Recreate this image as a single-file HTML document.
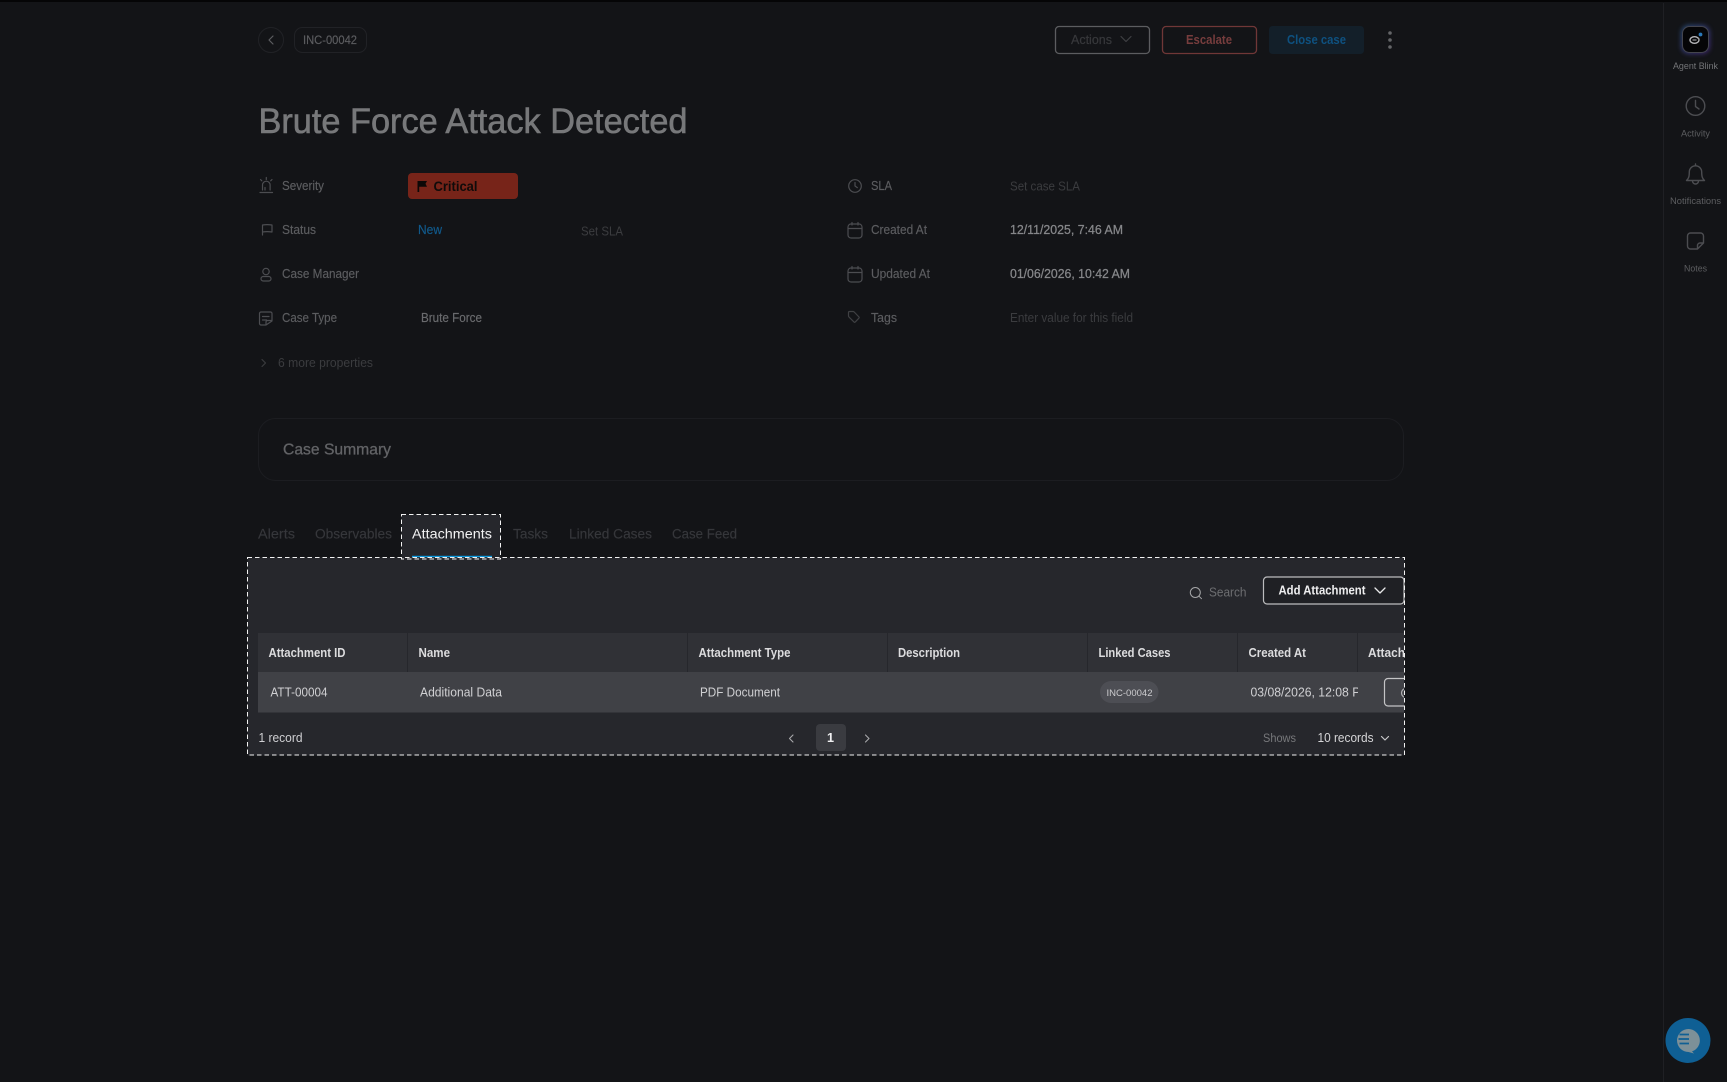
<!DOCTYPE html>
<html lang="en">
<head>
<meta charset="utf-8">
<title>Brute Force Attack Detected</title>
<style>
html,body{margin:0;padding:0;background:#131417;width:1727px;height:1082px;overflow:hidden}
svg{display:block;position:absolute;left:0;top:0}
text{font-family:"Liberation Sans",sans-serif}
.lbl{font-size:12.5px;fill:#5c5d60;stroke:#5c5d60;stroke-width:.15}
.dim{font-size:12.5px;fill:#3b3c3f}
.val{font-size:12.5px;fill:#86878a;stroke:#86878a;stroke-width:.25}
.tab{font-size:14px;fill:#36373b;stroke:#36373b;stroke-width:.15}
.th{font-size:12.5px;fill:#dcdcde;font-weight:bold}
.td{font-size:12.5px;fill:#d0d0d3}
.side{font-size:9.5px;fill:#5d5e61;text-anchor:start}
.ic{fill:none;stroke:#4c4d51;stroke-width:1.2;stroke-linecap:round;stroke-linejoin:round}
</style>
</head>
<body>
<svg width="1727" height="1082" viewBox="0 0 1727 1082" xmlns="http://www.w3.org/2000/svg">
<defs>
<clipPath id="tbl"><rect x="258" y="630" width="1146" height="90"/></clipPath>
<clipPath id="cell"><rect x="1240" y="672" width="118" height="40"/></clipPath>
<filter id="glow" x="-50%" y="-50%" width="200%" height="200%"><feGaussianBlur stdDeviation="2.5"/></filter>
<linearGradient id="gl" x1="0" y1="0" x2="1" y2="1"><stop offset="0" stop-color="#2f6fb0"/><stop offset="1" stop-color="#5b2ea0"/></linearGradient>
</defs>
<rect width="1727" height="1082" fill="#131417"/>
<rect width="1727" height="2" fill="#050506"/>

<!-- right rail -->
<line x1="1663.5" y1="3" x2="1663.5" y2="1082" stroke="#1f2024" stroke-width="1"/>
<rect x="1681" y="25" width="29" height="29" rx="8" fill="url(#gl)" opacity=".6" filter="url(#glow)"/>
<rect x="1682.5" y="26.5" width="26" height="26" rx="7" fill="#050507" stroke="#44454e"/>
<ellipse cx="1694.5" cy="40" rx="4.5" ry="3.3" fill="none" stroke="#b5b5b8" stroke-width="1.4"/>
<line x1="1692.5" y1="40" x2="1696.5" y2="40" stroke="#b5b5b8"/>
<circle cx="1700.5" cy="34.5" r="1.9" fill="#2a78b8"/>
<circle cx="1699" cy="39" r=".8" fill="#888"/>
<text class="side" x="1673" y="69" textLength="45" lengthAdjust="spacingAndGlyphs" style="fill:#737477">Agent Blink</text>
<circle cx="1695.5" cy="106" r="9.3" class="ic" style="stroke-width:1.4"/>
<path d="M1695.5 100.5v6l3.500 2.500" class="ic" style="stroke-width:1.4"/>
<text class="side" x="1681" y="136.500" textLength="29" lengthAdjust="spacingAndGlyphs">Activity</text>
<path d="M1686.500 180.500c2.200-2 2.800-4 2.800-8.500a6.200 6.200 0 0 1 12.400 0c0 4.500 .6 6.500 2.800 8.500zM1692.500 181a3 3 0 0 0 6 0" class="ic" style="stroke-width:1.400"/>
<path d="M1695.500 164v1.800" class="ic" style="stroke-width:1.400"/>
<text class="side" x="1670" y="204" textLength="51" lengthAdjust="spacingAndGlyphs">Notifications</text>
<path d="M1697.500 249h-7a3 3 0 0 1-3-3v-10a3 3 0 0 1 3-3h10a3 3 0 0 1 3 3v7zM1697.500 249v-3.500a2.500 2.500 0 0 1 2.500-2.500h3.500" class="ic" style="stroke-width:1.400"/>
<text class="side" x="1684" y="271.500" textLength="23" lengthAdjust="spacingAndGlyphs">Notes</text>

<!-- top bar -->
<circle cx="271" cy="40" r="12.500" fill="none" stroke="#212226"/>
<path d="M273 36l-4 4 4 4" class="ic" style="stroke:#5c5d60"/>
<rect x="294.500" y="27.500" width="72" height="25" rx="8" fill="none" stroke="#212226"/>
<text x="303" y="44" font-size="11.500" fill="#5c5d60" stroke="#5c5d60" stroke-width=".15" textLength="54" lengthAdjust="spacingAndGlyphs">INC-00042</text>

<rect x="1055.500" y="26.500" width="94" height="27" rx="3.500" fill="none" stroke="#5c5d60" stroke-width="1.300"/>
<text x="1071" y="44" font-size="12.500" fill="#37383b" stroke="#37383b" stroke-width=".2" textLength="41" lengthAdjust="spacingAndGlyphs">Actions</text>
<path d="M1121 36.500l5 5 5-5" class="ic" style="stroke:#3f4043"/>
<rect x="1162.500" y="26.500" width="94" height="27" rx="3.500" fill="none" stroke="#703737" stroke-width="1.300"/>
<text x="1186" y="44" font-size="12.500" font-weight="bold" fill="#773d3d" textLength="46" lengthAdjust="spacingAndGlyphs">Escalate</text>
<rect x="1269" y="26" width="95" height="28" rx="3.500" fill="#131f29"/>
<text x="1287" y="44" font-size="12.500" font-weight="bold" fill="#0e5180" textLength="59" lengthAdjust="spacingAndGlyphs">Close case</text>
<circle cx="1390" cy="33" r="1.800" fill="#646568"/><circle cx="1390" cy="40" r="1.800" fill="#646568"/><circle cx="1390" cy="47" r="1.800" fill="#646568"/>

<!-- title -->
<text x="258.500" y="133" font-size="35" fill="#77787a" stroke="#77787a" stroke-width=".6" textLength="429" lengthAdjust="spacingAndGlyphs">Brute Force Attack Detected</text>

<!-- properties left -->
<path d="M262.500 190v-5a3.800 3.800 0 0 1 7.600 0v5M260 192.500h12.500M266.300 177.500v2M260.500 179.500l1.300 1.300M272 179.500l-1.300 1.300M265 187.500v2.500" class="ic"/>
<text class="lbl" x="282" y="190" textLength="42" lengthAdjust="spacingAndGlyphs">Severity</text>
<rect x="408" y="173" width="110" height="26" rx="4" fill="#772419"/>
<path d="M417.500 192v-11h9.500l-1.500 2.700 1.500 3h-7.800v5.300z" fill="#0c0807"/>
<text x="433.500" y="191" font-size="14" font-weight="bold" fill="#100b0a" textLength="44" lengthAdjust="spacingAndGlyphs">Critical</text>

<path d="M262.500 235v-10q4.500-.8 9.500 0v7q-5-.8-9.500 0" class="ic"/>
<text class="lbl" x="282" y="234" textLength="34" lengthAdjust="spacingAndGlyphs">Status</text>
<text x="418" y="234" font-size="12.500" fill="#115a8c" stroke="#115a8c" stroke-width=".15" textLength="24" lengthAdjust="spacingAndGlyphs">New</text>
<text class="dim" x="581" y="235.500" textLength="42" lengthAdjust="spacingAndGlyphs">Set SLA</text>

<circle cx="266" cy="271.500" r="3.200" class="ic"/>
<rect x="261" y="276.500" width="10" height="4.500" rx="2.250" class="ic"/>
<text class="lbl" x="282" y="278" textLength="77" lengthAdjust="spacingAndGlyphs">Case Manager</text>

<path d="M266 325h-5a1.500 1.500 0 0 1-1.500-1.500v-10a1.500 1.500 0 0 1 1.500-1.500h9.500a1.500 1.500 0 0 1 1.500 1.500v7.500zM262.500 316.500h6.500M262.500 320h4M266 325v-3a1.500 1.500 0 0 1 1.500-1.500h4.500" class="ic"/>
<text class="lbl" x="282" y="322" textLength="55" lengthAdjust="spacingAndGlyphs">Case Type</text>
<text class="val" x="421" y="322" textLength="61" lengthAdjust="spacingAndGlyphs" style="fill:#6a6b6e;stroke:#6a6b6e;stroke-width:.15">Brute Force</text>

<path d="M262 359.500l3.500 3.500-3.500 3.500" class="ic" style="stroke:#3a3b3e"/>
<text class="dim" x="278" y="367" textLength="95" lengthAdjust="spacingAndGlyphs">6 more properties</text>

<!-- properties right -->
<circle cx="855" cy="186" r="6.300" class="ic"/>
<path d="M855 182.500v3.500l2.300 1.600" class="ic"/>
<text class="lbl" x="871" y="190" textLength="21" lengthAdjust="spacingAndGlyphs">SLA</text>
<text class="dim" x="1010" y="190.500" textLength="70" lengthAdjust="spacingAndGlyphs">Set case SLA</text>

<rect x="848" y="224" width="14" height="14" rx="3" class="ic"/><path d="M848 228.500h14M852 222.500v2.500M858 222.500v2.500" class="ic"/>
<text class="lbl" x="871" y="234" textLength="56" lengthAdjust="spacingAndGlyphs">Created At</text>
<text class="val" x="1010" y="234" textLength="113" lengthAdjust="spacingAndGlyphs">12/11/2025, 7:46 AM</text>

<rect x="848" y="268" width="14" height="14" rx="3" class="ic"/><path d="M848 272.500h14M852 266.500v2.500M858 266.500v2.500" class="ic"/>
<text class="lbl" x="871" y="278" textLength="59" lengthAdjust="spacingAndGlyphs">Updated At</text>
<text class="val" x="1010" y="278" textLength="120" lengthAdjust="spacingAndGlyphs">01/06/2026, 10:42 AM</text>

<path d="M848.500 312.500q0-1 1-1h3.500q.7 0 1.200.5l4.800 5q.5.600 0 1.100l-3.800 4q-.6.500-1.100 0l-5.100-5q-.5-.5-.5-1.200z" class="ic" style="stroke:#3f4043"/>
<text class="lbl" x="871" y="322" textLength="26" lengthAdjust="spacingAndGlyphs">Tags</text>
<text class="dim" x="1010" y="322" textLength="123" lengthAdjust="spacingAndGlyphs">Enter value for this field</text>

<!-- case summary -->
<rect x="258.500" y="418.500" width="1145" height="62" rx="17" fill="#131417" stroke="#1c1d21"/>
<text x="283" y="454.500" font-size="16" fill="#626366" stroke="#626366" stroke-width=".3" textLength="108" lengthAdjust="spacingAndGlyphs">Case Summary</text>

<!-- tabs -->
<text class="tab" x="258" y="538.500" textLength="37" lengthAdjust="spacingAndGlyphs">Alerts</text>
<text class="tab" x="315" y="538.500" textLength="77" lengthAdjust="spacingAndGlyphs">Observables</text>
<text class="tab" x="513" y="538.500" textLength="35" lengthAdjust="spacingAndGlyphs">Tasks</text>
<text class="tab" x="569" y="538.500" textLength="83" lengthAdjust="spacingAndGlyphs">Linked Cases</text>
<text class="tab" x="672" y="538.500" textLength="65" lengthAdjust="spacingAndGlyphs">Case Feed</text>

<!-- panel -->
<rect x="247.500" y="557.500" width="1157" height="198" fill="#26272c"/>
<rect x="401.500" y="514.500" width="99" height="44.500" fill="#26272c"/>
<text x="412" y="538.500" font-size="14" fill="#f2f2f3" textLength="80" lengthAdjust="spacingAndGlyphs">Attachments</text>
<rect x="412" y="555.800" width="80" height="1.400" fill="#0e9be0"/>

<text x="1209" y="596.500" font-size="12.500" fill="#6d6e71" textLength="37.500" lengthAdjust="spacingAndGlyphs">Search</text>
<circle cx="1195.300" cy="592.500" r="5" fill="none" stroke="#a5a6a8" stroke-width="1"/>
<path d="M1199 596.200l2.500 2.500" stroke="#a5a6a8" stroke-width="1" stroke-linecap="round"/>
<rect x="1263.500" y="577" width="140.500" height="27" rx="3.500" fill="#1f2024" stroke="#bcbcbe" stroke-width="1.200"/>
<text x="1278.500" y="594.500" font-size="12.500" font-weight="bold" fill="#eeeeef" textLength="87" lengthAdjust="spacingAndGlyphs">Add Attachment</text>
<path d="M1375 588l5 5 5-5" fill="none" stroke="#e8e8e9" stroke-width="1.300" stroke-linecap="round" stroke-linejoin="round"/>

<!-- table -->
<g clip-path="url(#tbl)">
<rect x="258" y="633" width="1146" height="39" fill="#303136"/>
<rect x="258" y="672" width="1146" height="40.500" fill="#404146"/>
<path d="M407.500 633v39M687.500 633v39M887.500 633v39M1087.500 633v39M1237.500 633v39M1357.500 633v39" stroke="#26272c"/>
<text class="th" x="268.500" y="657" textLength="77" lengthAdjust="spacingAndGlyphs">Attachment ID</text>
<text class="th" x="418.500" y="657" textLength="31.500" lengthAdjust="spacingAndGlyphs">Name</text>
<text class="th" x="698.500" y="657" textLength="92" lengthAdjust="spacingAndGlyphs">Attachment Type</text>
<text class="th" x="898" y="657" textLength="62" lengthAdjust="spacingAndGlyphs">Description</text>
<text class="th" x="1098.500" y="657" textLength="72" lengthAdjust="spacingAndGlyphs">Linked Cases</text>
<text class="th" x="1248.500" y="657" textLength="57.500" lengthAdjust="spacingAndGlyphs">Created At</text>
<text class="th" x="1368" y="657" textLength="37" lengthAdjust="spacingAndGlyphs">Attach</text>
<text class="td" x="270.500" y="696.500" textLength="57" lengthAdjust="spacingAndGlyphs">ATT-00004</text>
<text class="td" x="420" y="696.500" textLength="82" lengthAdjust="spacingAndGlyphs">Additional Data</text>
<text class="td" x="700" y="696.500" textLength="80" lengthAdjust="spacingAndGlyphs">PDF Document</text>
<rect x="1100" y="681" width="58.500" height="22" rx="11" fill="#4d4e54"/>
<text x="1106.500" y="696" font-size="9.500" fill="#cbcbce" textLength="46" lengthAdjust="spacingAndGlyphs">INC-00042</text>
<g clip-path="url(#cell)"><text class="td" x="1250.500" y="696.500" textLength="120" lengthAdjust="spacingAndGlyphs">03/08/2026, 12:08 PM</text></g>
<rect x="1384.500" y="678.500" width="30" height="27.500" rx="3.500" fill="#404146" stroke="#c4c4c6" stroke-width="1.200"/>
<circle cx="1406" cy="693" r="4.500" fill="none" stroke="#b0b0b3" stroke-width="1.200"/>
</g>

<text x="258.500" y="742" font-size="12.500" fill="#cfcfd2" textLength="44" lengthAdjust="spacingAndGlyphs">1 record</text>
<path d="M793 735l-3.500 3.500 3.500 3.500" fill="none" stroke="#a8a8ab" stroke-width="1.100" stroke-linecap="round" stroke-linejoin="round"/>
<rect x="816" y="724" width="30" height="27" rx="4" fill="#3a3b40"/>
<text x="827" y="742" font-size="12.500" font-weight="bold" fill="#f0f0f1" textLength="7" lengthAdjust="spacingAndGlyphs">1</text>
<path d="M865.500 735l3.500 3.500-3.500 3.500" fill="none" stroke="#a8a8ab" stroke-width="1.100" stroke-linecap="round" stroke-linejoin="round"/>
<text x="1263" y="742" font-size="11.500" fill="#77787b" textLength="33" lengthAdjust="spacingAndGlyphs">Shows</text>
<text x="1317.500" y="742" font-size="12.500" fill="#d6d6d8" textLength="56" lengthAdjust="spacingAndGlyphs">10 records</text>
<path d="M1381.500 736.500l3.500 3.500 3.500-3.500" fill="none" stroke="#c8c8ca" stroke-width="1.200" stroke-linecap="round" stroke-linejoin="round"/>

<!-- dashed focus outlines -->
<rect x="247.500" y="557.500" width="1157" height="197.500" fill="none" stroke="#f2f2f2" stroke-width="1" stroke-dasharray="4.500 3"/>
<rect x="401.500" y="514.500" width="99" height="44.500" fill="none" stroke="#f2f2f2" stroke-width="1" stroke-dasharray="4.500 3"/>

<!-- FAB -->
<circle cx="1688" cy="1040.500" r="22.500" fill="#0f5f94"/>
<path d="M1688.500 1029a11.500 11.500 0 0 1 3.500 22.400l2 2.100-5.500-1.500a11.500 11.500 0 0 1 0-23z" fill="#7d9098"/>
<path d="M1679.500 1034.500h9.500M1678.500 1039h10.500M1679.500 1043.500h9.500" stroke="#0f5f94" stroke-width="1.800"/>
</svg>
</body>
</html>
